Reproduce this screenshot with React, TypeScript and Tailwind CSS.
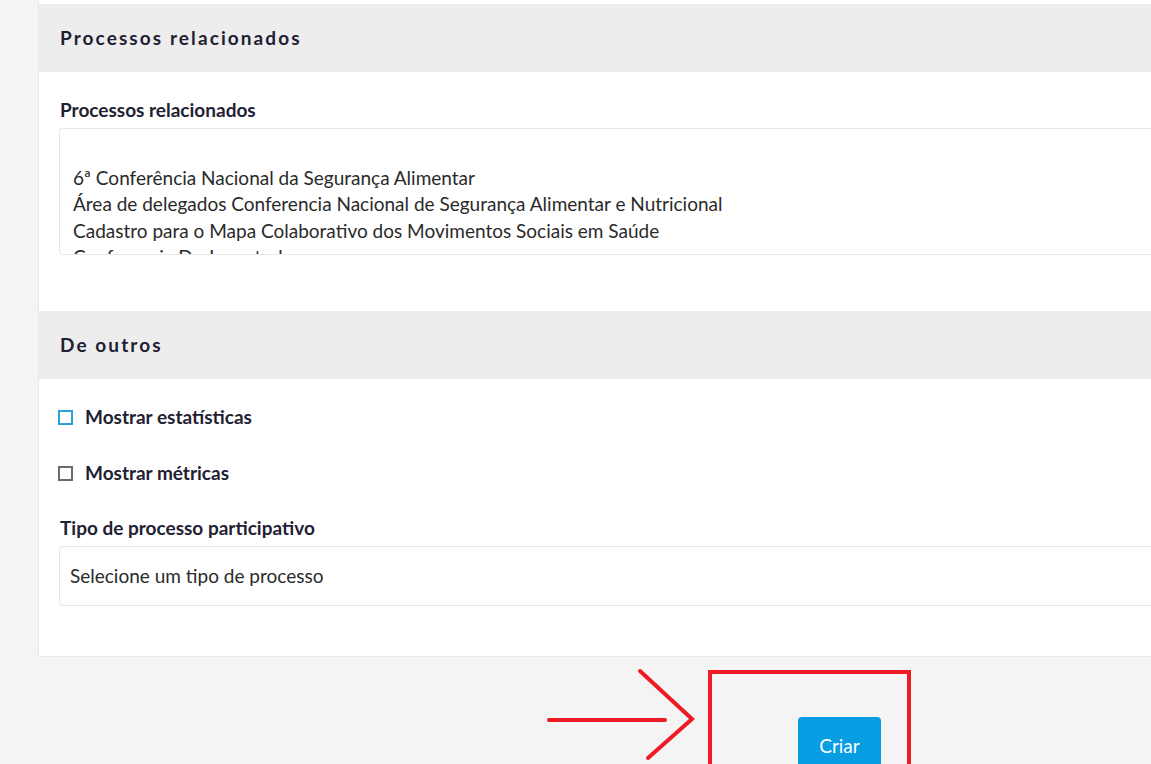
import React from "react";

export default function App() {
  const font = { fontFamily: '"Lato", "Noto Sans", sans-serif' };
  return (
    <div className="relative w-[1151px] h-[764px] overflow-hidden bg-[#f4f4f4] text-[#1f2133]" style={font}>
      <div className="ml-[38px] w-[1160px] bg-white border-l border-b border-[#e9e9e9] rounded-bl-[3px]">
        <div className="h-[4px]" />
        <div className="h-[68px] bg-[#ededed] px-[21px] flex items-center">
          <h2 className="text-[19px] font-bold tracking-[0.11em]">Processos relacionados</h2>
        </div>
        <div className="px-[20px] pt-[27px] pb-[56px]">
          <div className="text-[19px] font-bold leading-[22px] mb-[7px] pl-[1px]">Processos relacionados</div>
          <div className="h-[127px] border border-[#e8e8e8] rounded-[3px] overflow-hidden pl-[13px] pt-[10px] text-[19px] text-[#2a2a2a] leading-[26.3px]">
            <div className="h-[26px]" />
            <div>6ª Conferência Nacional da Segurança Alimentar</div>
            <div>Área de delegados Conferencia Nacional de Segurança Alimentar e Nutricional</div>
            <div>Cadastro para o Mapa Colaborativo dos Movimentos Sociais em Saúde</div>
            <div>Conferencia Da Juventude</div>
          </div>
        </div>
        <div className="h-[68px] bg-[#ededed] px-[21px] flex items-center">
          <h2 className="text-[19px] font-bold tracking-[0.11em]">De outros</h2>
        </div>
        <div className="px-[20px] pt-[27px] pb-[50px]">
          <label className="flex items-center h-[22px]">
            <span className="w-[15px] h-[15px] -ml-[1px] border-2 border-[#2b9fdc] mr-[12px]" />
            <span className="text-[19px] font-bold">Mostrar estatísticas</span>
          </label>
          <label className="flex items-center h-[22px] mt-[34px]">
            <span className="w-[15px] h-[15px] -ml-[1px] border-2 border-[#6b6b6b] mr-[12px]" />
            <span className="text-[19px] font-bold">Mostrar métricas</span>
          </label>
          <div className="text-[19px] font-bold leading-[22px] mt-[33px] mb-[7px] pl-[1px]">Tipo de processo participativo</div>
          <div className="h-[60px] border border-[#e8e8e8] rounded-[4px] flex items-center pl-[10px] text-[19px] text-[#2a2a2a]">
            Selecione um tipo de processo
          </div>
        </div>
      </div>
      <div className="flex pl-[798px] pt-[60px]">
        <button className="w-[83px] h-[60px] bg-[#069de3] rounded-t-[4px] text-white text-[19px] flex justify-center pt-[15px]">
          Criar
        </button>
      </div>
      <div className="absolute left-[708px] top-[670px] w-[203px] h-[110px] border-[4px] border-[#ed1c24]" />
      <svg className="absolute left-0 top-0" width="1151" height="764" viewBox="0 0 1151 764">
        <path d="M549 720 L665 720" stroke="#ed1c24" strokeWidth="4" strokeLinecap="round" fill="none" />
        <path d="M640 671 L692 719 L648 758" stroke="#ed1c24" strokeWidth="4" strokeLinecap="round" strokeLinejoin="miter" fill="none" />
      </svg>
    </div>
  );
}
